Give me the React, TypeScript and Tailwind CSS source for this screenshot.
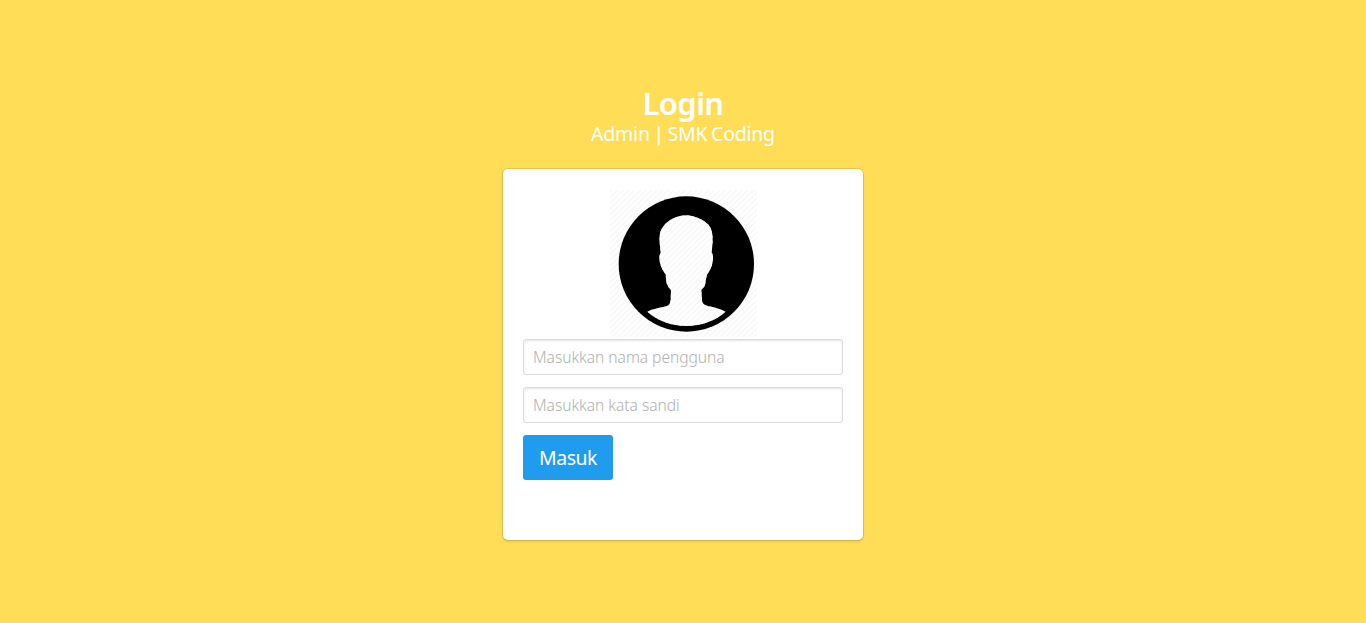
const bust =
  "M259 91C233 91 205 104 190 124C177 140 177 160 180 184L182 204C177 212 177 220 180 233C183 249 191 260 197 268C198 283 198 295 204 304C207 309 211 312 213 316L212 343C211 355 208 361 200 364C179 368 159 372 142 380C172 407 215 423 259 423C303 423 347 407 377 380C360 371 343 367 323 363C312 360 307 356 306 346L304 315C307 311 312 308 314 303C318 292 317 281 321 269C329 258 336 245 338 230C340 218 340 212 335 202L338 170C338 147 337 133 324 118C309 103 282 92 259 91Z";

function Avatar() {
  return (
    <svg className="mx-auto block h-[148px] w-[148px]" viewBox="27 12 444 444" aria-hidden="true">
      <defs>
        <pattern id="stripes" width="17" height="17" patternUnits="userSpaceOnUse">
          <path d="M-4 4L4 -4M0 17L17 0M13 21L21 13" stroke="#f7f7f7" strokeWidth="5" />
        </pattern>
      </defs>
      <rect x="30" y="15" width="441" height="441" fill="url(#stripes)" />
      <circle cx="259" cy="237" r="203" fill="#000" />
      <path d={bust} fill="#fff" />
      <path d={bust} fill="url(#stripes)" />
    </svg>
  );
}

const field =
  "block h-9 w-full rounded-[3px] border border-[#dbdbdb] bg-white px-[9px] text-[15.6px] font-light tracking-[-0.04px] text-[#363636] shadow-[inset_0_1px_2px_rgba(10,10,10,0.1)] outline-none placeholder:text-[#b0b0b0]";

export default function App() {
  return (
    <main className="flex h-[623px] flex-col items-center bg-[#ffdd57] pt-[86px] font-['Noto_Sans','Open_Sans',sans-serif]">
      <h1 className="h-[35px] text-[31px] leading-[35px] font-semibold tracking-[-0.6px] text-white">Login</h1>
      <h2 className="h-[26px] text-[19.5px] leading-[26px] tracking-[-0.22px] [word-spacing:-1.2px] text-white">
        Admin | SMK Coding
      </h2>
      <form
        className="mt-[22px] h-[371px] w-[360px] rounded-[5px] bg-white p-5 shadow-[0_2px_3px_rgba(10,10,10,0.1),0_0_0_1px_rgba(10,10,10,0.1)]"
        onSubmit={(e) => e.preventDefault()}
      >
        <div className="h-[150px]">
          <Avatar />
        </div>
        <div className="flex flex-col items-start gap-3">
          <input className={field} type="text" placeholder="Masukkan nama pengguna" />
          <input className={field} type="password" placeholder="Masukkan kata sandi" />
          <button className="h-[45px] w-[90px] rounded-[3px] bg-[#209cee] pt-px text-[19.5px] tracking-[-0.5px] text-white">
            Masuk
          </button>
        </div>
      </form>
    </main>
  );
}
